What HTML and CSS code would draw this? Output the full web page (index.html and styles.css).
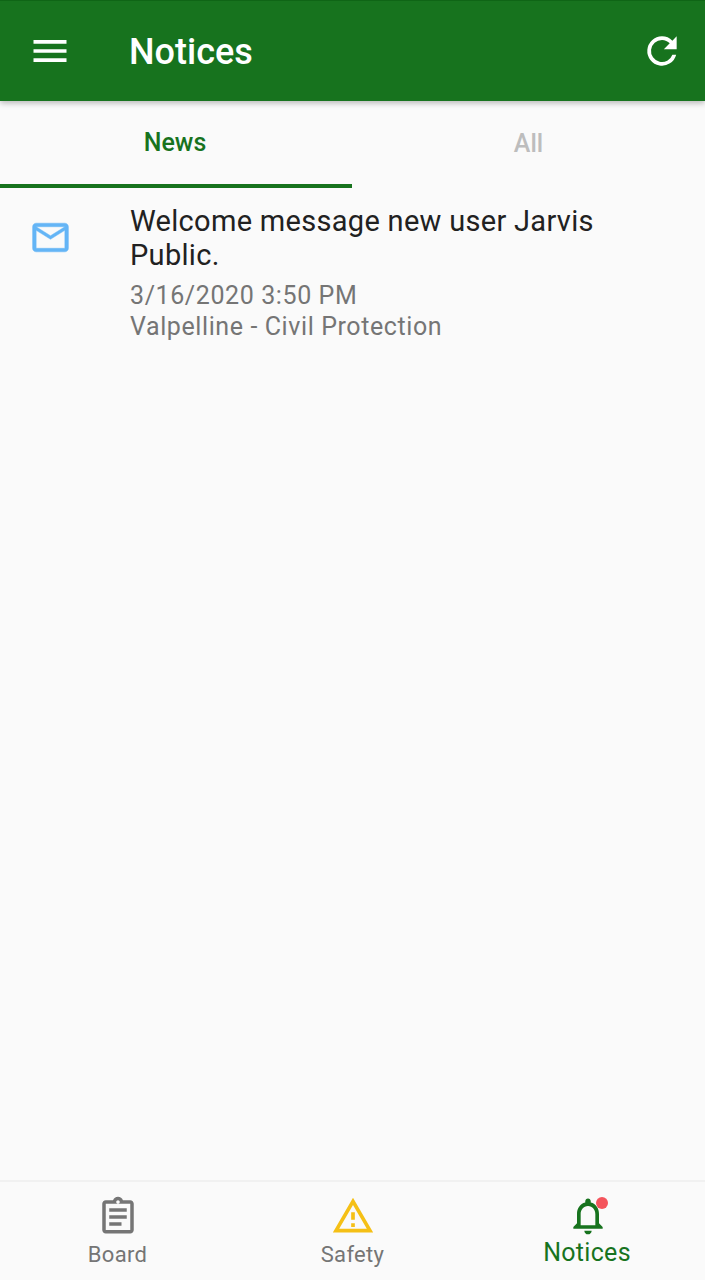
FILE: index.html
```html
<!DOCTYPE html>
<html lang="en">
<head>
<meta charset="utf-8">
<title>Notices</title>
<link rel="stylesheet" href="styles.css">
</head>
<body>
<div class="app">
  <header class="appbar">
    <svg class="menu-icon" viewBox="0 0 24 24"><path d="M3 18h18v-2H3v2zm0-5h18v-2H3v2zm0-7v2h18V6H3z"/></svg>
    <h1 class="title">Notices</h1>
    <svg class="refresh-icon" viewBox="0 0 24 24"><path d="M17.65 6.35A7.96 7.96 0 0 0 12 4a8 8 0 1 0 7.73 10h-2.08A6 6 0 1 1 12 6c1.66 0 3.14.69 4.22 1.78L13 11h7V4l-2.35 2.35z"/></svg>
  </header>
  <nav class="tabs">
    <div class="tab tab-active">News</div>
    <div class="tab">All</div>
  </nav>
  <main class="list">
    <article class="notice">
      <div class="notice-icon">
        <svg class="mail-icon" viewBox="0 0 24 24"><path d="M20 4H4c-1.100 0-2 .9-2 2v12c0 1.100.9 2 2 2h16c1.100 0 2-.9 2-2V6c0-1.100-.9-2-2-2zm0 14H4V8l8 5 8-5v10zm-8-7L4 6h16l-8 5z"/></svg>
      </div>
      <div class="notice-body">
        <div class="notice-title">Welcome message new user Jarvis Public.</div>
        <div class="notice-meta">3/16/2020 3:50 PM</div>
        <div class="notice-meta">Valpelline - Civil Protection</div>
      </div>
    </article>
  </main>
  <footer class="bottom">
    <div class="nav-item">
      <svg class="nav-icon icon-grey" viewBox="0 0 24 24"><path fill-rule="evenodd" d="M19 3h-4.180C14.400 1.840 13.300 1 12 1s-2.400.84-2.820 2H5c-1.100 0-2 .9-2 2v15c0 1.100.9 2 2 2h14c1.100 0 2-.9 2-2V5c0-1.100-.9-2-2-2zM12 3c.55 0 1 .45 1 1s-.45 1-1 1-1-.45-1-1 .45-1 1-1zM5 5h14v15H5V5zm2 2.500h10v2H7v-2zm0 4h10v2H7v-2zm0 4h7v2H7v-2z"/></svg>
      <span class="nav-label">Board</span>
    </div>
    <div class="nav-item">
      <svg class="nav-icon icon-yellow" viewBox="0 0 24 24"><path d="M12 5.990 19.530 19H4.470L12 5.990M12 2 1 21h22L12 2zm1 14h-2v2h2v-2zm0-6h-2v4h2v-4z"/></svg>
      <span class="nav-label">Safety</span>
    </div>
    <div class="nav-item nav-item-active">
      <span class="bell-wrap">
        <svg class="nav-icon icon-green" viewBox="0 0 24 24"><path d="M12 22c1.100 0 2-.9 2-2h-4c0 1.100.9 2 2 2zm6-6v-5c0-3.070-1.630-5.640-4.500-6.320V4c0-.83-.67-1.500-1.500-1.500s-1.500.67-1.500 1.500v.68C7.640 5.360 6 7.920 6 11v5l-2 2v1h16v-1l-2-2zm-2 1H8v-6c0-2.480 1.510-4.500 4-4.500s4 2.020 4 4.500v6z"/></svg>
        <span class="badge"></span>
      </span>
      <span class="nav-label">Notices</span>
    </div>
  </footer>
</div>
</body>
</html>
```
FILE: styles.css
```css
* { box-sizing: border-box; }
html, body { margin: 0; padding: 0; }
body { font-family: Roboto, "Noto Sans", sans-serif; background: #fafafa; }
.app { width: 705px; height: 1280px; display: flex; flex-direction: column; background: #fafafa; overflow: hidden; }

.appbar { height: 101px; flex: none; display: flex; align-items: center; background: #17731e; color: #fff; box-shadow: 0 2px 6px rgba(0,0,0,.28); border-top: 1px solid #0f6516; padding: 0 21px 0 28px; position: relative; z-index: 1; }
.menu-icon { width: 44px; height: 44px; fill: #fff; flex: none; }
.title { margin: 2px 0 0 57px; flex: 1; font-size: 36px; font-weight: 500; line-height: 40px; }
.refresh-icon { width: 44px; height: 44px; fill: #fff; flex: none; }

.tabs { height: 87px; flex: none; display: flex; }
.tab { flex: 1; display: flex; align-items: center; justify-content: center; padding-bottom: 2px; font-size: 25px; font-weight: 500; color: #bdbdbd; }
.tab-active { flex: 0 0 352px; padding-bottom: 0; padding-right: 2px; color: #17731e; border-bottom: 4px solid #17731e; }

.list { flex: 1; }
.notice { display: flex; padding-top: 16px; }
.notice-icon { width: 130px; flex: none; padding: 12px 0 0 29px; }
.mail-icon { display: block; width: 43px; height: 43px; fill: #64b5f6; stroke: #64b5f6; stroke-width: .25; }
.notice-body { flex: 1; padding-right: 100px; }
.notice-title { font-size: 29px; line-height: 34px; color: #212121; letter-spacing: .3px; }
.notice-meta { font-size: 25px; line-height: 31px; color: #757575; letter-spacing: .6px; }
.notice-title + .notice-meta { margin-top: 8px; }

.bottom { height: 100px; flex: none; display: flex; border-top: 2px solid #f1f1f1; background: #fafafa; }
.nav-item { flex: 1; display: flex; flex-direction: column; align-items: center; padding-top: 12px; }
.nav-icon { display: block; width: 42px; height: 42px; margin: 1px; }
.icon-grey { fill: #757575; }
.icon-yellow { width: 44px; height: 44px; margin: 0; fill: #f5c016; }
.icon-green { width: 44px; height: 44px; margin: 0; fill: #17731e; }
.nav-label { font-size: 22px; line-height: 26px; color: #757575; margin-top: 4px; letter-spacing: .3px; }
.nav-item-active .nav-label { font-size: 25px; line-height: 28px; color: #17731e; margin: 1px 1px 0 0; letter-spacing: .3px; }
.bell-wrap { position: relative; display: block; }
.badge { position: absolute; top: 3px; right: 2px; width: 12px; height: 12px; border-radius: 50%; background: #f4545c; }
```
